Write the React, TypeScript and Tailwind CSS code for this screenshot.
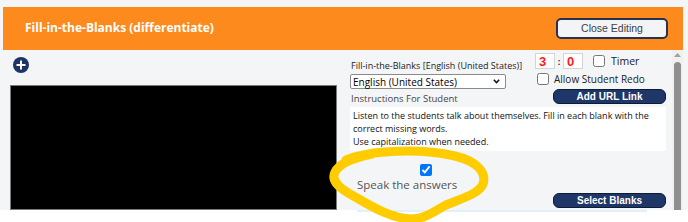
import React from "react";

const ui = { fontFamily: '"Open Sans", "Noto Sans", sans-serif' };
const narrow = { fontFamily: '"Liberation Sans Narrow", "Liberation Sans", Arial, sans-serif' };

function PlusIcon() {
  return (
    <svg width="16" height="16" viewBox="0 0 16 16">
      <circle cx="8" cy="8" r="8" fill="#1d3566" />
      <rect x="7" y="3.5" width="2" height="9" fill="#fff" />
      <rect x="3.5" y="7" width="9" height="2" fill="#fff" />
    </svg>
  );
}

function NavyButton({ label }: { label: string }) {
  return (
    <button
      className="flex h-[15px] w-[113px] items-center justify-center rounded-[6px] border border-[#0f1a33] bg-[#1f3669] text-[10px] font-bold leading-none text-white"
      style={narrow}
    >
      {label}
    </button>
  );
}

function TimeBox({ value }: { value: string }) {
  return (
    <div className="flex h-[16px] w-[20px] items-center border border-[#d4d4d4] bg-white pl-[3px] text-[13px] font-bold leading-none text-[#ff1a1a]" style={narrow}>
      {value}
    </div>
  );
}

export default function App() {
  return (
    <div className="relative h-[222px] w-[688px] overflow-hidden bg-white" style={ui}>
      <div className="h-[210px] bg-[#f4f5f7] pl-[3px] pr-[5px] pt-[7px]">
        {/* header */}
        <div className="flex h-[43px] bg-[#fc8a1d]">
          <div className="pl-[22px] pt-[12px] text-[12px] font-bold leading-[18px] text-white">
            Fill-in-the-Blanks (differentiate)
          </div>
          <button
            className="ml-auto mr-[15px] mt-[11px] flex h-[21px] w-[112px] items-center justify-center rounded-[5px] border-2 border-[#28324f] bg-[#f3f4f6] text-[10.5px] leading-none text-[#3b3e4a]"
            style={narrow}
          >
            Close Editing
          </button>
        </div>

        <div className="flex">
          {/* left column */}
          <div className="w-[347px]">
            <div className="ml-[10px] mt-[7px]">
              <PlusIcon />
            </div>
            <div className="ml-[7px] mt-[12px] h-[125px] w-[327px] border border-[#7a7a7a] bg-black" />
          </div>

          {/* right column */}
          <div className="w-[316px]">
            <div className="flex">
              <div className="w-[185px] pt-[10px]">
                <div className="pl-[1px] text-[9px] leading-[12px] text-[#222]">
                  Fill-in-the-Blanks [English (United States)]
                </div>
                <div className="mt-[2px] flex h-[15px] w-[156px] items-center justify-between rounded-[2px] border border-[#8a8a8a] bg-white pl-[2px] pr-[5px]">
                  <span className="text-[10px] leading-none text-black">English (United States)</span>
                  <svg width="7" height="5" viewBox="0 0 7 5">
                    <path d="M0.8 0.8 L3.5 3.6 L6.2 0.8" fill="none" stroke="#111" strokeWidth="1.5" />
                  </svg>
                </div>
                <div className="mt-[4px] pl-[1px] text-[9.5px] leading-[12px] text-[#444]">
                  Instructions For Student
                </div>
              </div>
              <div className="w-[131px] pt-[3px]">
                <div className="flex items-center">
                  <TimeBox value="3" />
                  <span className="w-[8px] text-center text-[9px] font-bold leading-none text-[#333]">:</span>
                  <TimeBox value="0" />
                  <input type="checkbox" className="m-0 ml-[10px] h-[12px] w-[12px]" readOnly />
                  <span className="ml-[6px] text-[10.5px] leading-none text-[#222]">Timer</span>
                </div>
                <div className="mt-[4px] flex items-center">
                  <input type="checkbox" className="m-0 ml-[2px] h-[12px] w-[12px]" readOnly />
                  <span className="ml-[5px] text-[10px] leading-[12px] text-[#222]">Allow Student Redo</span>
                </div>
                <div className="ml-[18px] mt-[4px]">
                  <NavyButton label="Add URL Link" />
                </div>
              </div>
            </div>

            <div className="mt-[2px] h-[44px] w-[316px] bg-white px-[3px] pt-[2px] text-[9px] leading-[13px] text-[#111]">
              Listen to the students talk about themselves. Fill in each blank with the correct missing words.
              <br />
              Use capitalization when needed.
            </div>

            <div className="flex flex-col">
              <input type="checkbox" defaultChecked className="m-0 ml-[70px] mt-[13px] h-[12px] w-[12px]" />
              <div className="ml-[7px] mt-[2px] text-[11.5px] leading-[14px] text-[#555]">Speak the answers</div>
              <div className="mt-[1px] flex justify-end">
                <NavyButton label="Select Blanks" />
              </div>
            </div>
          </div>

          {/* scrollbar */}
          <div className="ml-[6px] flex h-[160px] w-[11px] flex-col items-center bg-[#f0f0f0]">
            <svg className="mt-[3px]" width="7" height="4" viewBox="0 0 7 4">
              <path d="M0 4 L3.5 0 L7 4 Z" fill="#a0a0a0" />
            </svg>
            <div className="mt-[5px] w-[7px] flex-1 rounded-t-full bg-[#8f8f8f]" />
          </div>
        </div>
      </div>
      <div className="ml-[357px] h-[2px] w-[290px] bg-[#e1f1fb]" />

      {/* yellow marker annotation */}
      <svg className="pointer-events-none absolute left-0 top-0" width="688" height="222" viewBox="0 0 688 222">
        <path
          d="M346 160 C 370 150, 420 148, 455 156 C 476 161, 487 172, 483 184 C 479 194, 460 199, 446 205 C 434 211, 426 219, 410 219 C 392 218, 374 208, 357 198 C 342 190, 330 182, 335 172 C 339 164, 352 158, 372 154"
          fill="none"
          stroke="#ffcc00"
          strokeWidth="9"
          strokeLinecap="round"
          strokeLinejoin="round"
        />
      </svg>
    </div>
  );
}
